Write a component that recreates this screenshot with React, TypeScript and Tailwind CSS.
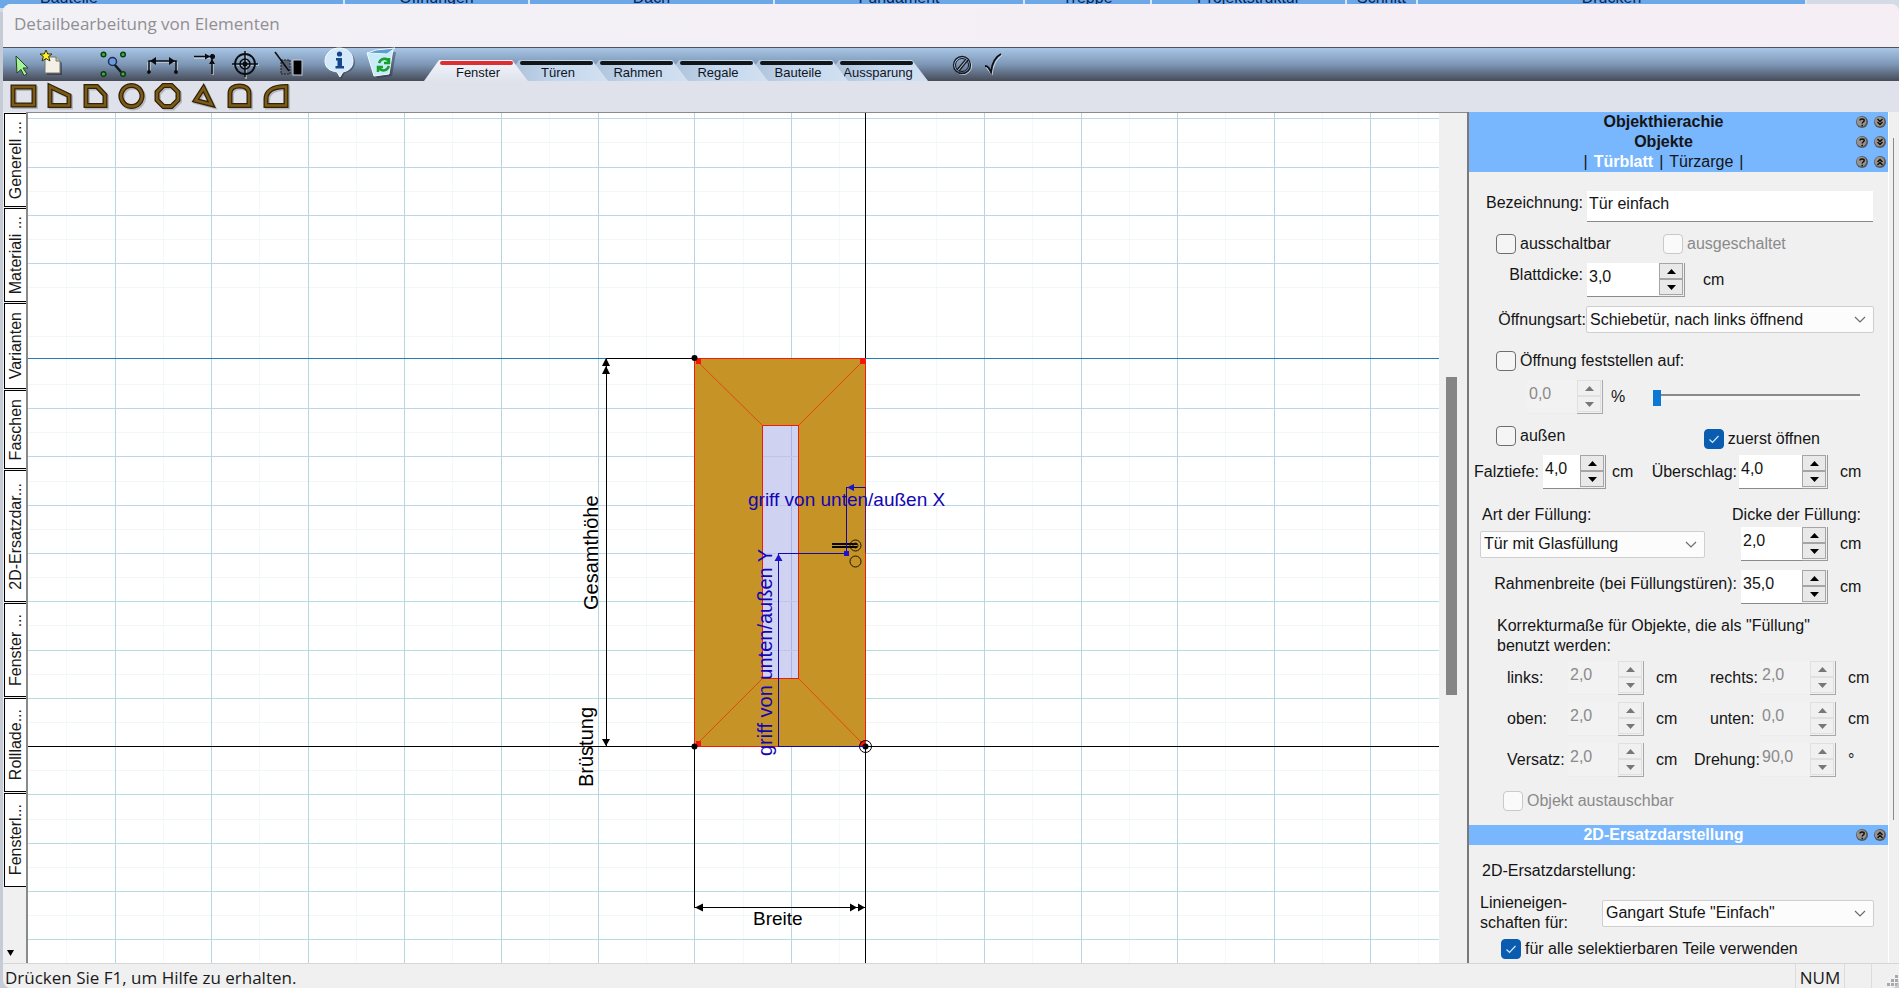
import { useState } from "react";
import type { ReactNode } from "react";
import clsx from "clsx";

const menuGroups = [
  { name: "Bauteile", style: "w-[345px] pl-10" },
  { name: "Öffnungen", style: "w-[185px] text-center" },
  { name: "Dach", style: "w-[245px] text-center" },
  { name: "Fundament", style: "w-[250px] text-center" },
  { name: "Treppe", style: "w-[127px] text-center" },
  { name: "Projektstruktur", style: "w-[195px] text-center" },
  { name: "Schnitt", style: "w-[71px] text-center" },
  { name: "Drucken", style: "w-[389px] text-center" },
];

const categories = [
  { name: "Fenster", layer: "z-60" },
  { name: "Türen", layer: "z-50" },
  { name: "Rahmen", layer: "z-40" },
  { name: "Regale", layer: "z-30" },
  { name: "Bauteile", layer: "z-20" },
  { name: "Aussparung", layer: "z-10" },
];

const sideTabs = [
  { name: "Generell ...", height: "h-[94px]" },
  { name: "Materiali ...", height: "h-[94px]" },
  { name: "Varianten", height: "h-[86px]" },
  { name: "Faschen", height: "h-[79px]" },
  { name: "2D-Ersatzdar...", height: "h-[132px]" },
  { name: "Fenster ...", height: "h-[94px]" },
  { name: "Rolllade...", height: "h-[94px]" },
  { name: "Fensterl...", height: "h-[94px]" },
];

const shapes = [
  { name: "Rechteck", d: "M4 5H25V23H4Z" },
  { name: "Schräge", d: "M5 4.5L24 13.500V23.500H5Z" },
  { name: "Abgeschrägte Ecke", d: "M5 4.500H16L24 13V23.500H5Z" },
  { name: "Kreis", d: "M14.500 3.500A10.500 10.500 0 1 1 14.400 3.500Z" },
  { name: "Achteck", d: "M10.500 3.500H18.500L25 10V18L18.500 24.500H10.500L4 18V10Z" },
  { name: "Dreieck", d: "M14.500 6L22.500 22.500L6.500 18.500Z" },
  { name: "Rundbogen", d: "M5 23.500V11.500C5 6.500 9 4 14.500 4C20 4 24 6.500 24 11.500V23.500Z" },
  { name: "Viertelbogen", d: "M25 4.500V23.500H5V17C5 9 12 4.500 25 4.500Z" },
];

function Tool({ label, className, children }: { label: string; className: string; children: ReactNode }) {
  return (
    <button aria-label={label} className={clsx("h-8 shrink-0", className)}>
      <svg className="h-8 w-full overflow-visible" fill="none">
        {children}
      </svg>
    </button>
  );
}

function MainToolbar() {
  const [active, setActive] = useState("Fenster");

  return (
    <div className="flex h-[34px] border-t border-[#4f535c] bg-linear-to-b from-[#a9c6e6] via-[#7d97b6] via-50% to-[#474c59] pl-2.5">
      <div className="flex">
        <Tool label="Auswahl" className="w-4">
          <path d="M3 8L15 20L10 20L14 26L11 27.500L8 21.500L4 25Z" fill="#a5f593" stroke="#24402a" strokeWidth="1" />
        </Tool>
        <Tool label="Neu" className="ml-3 w-6">
          <path d="M9 11H17L21 15V27H6V14Z" fill="#222" opacity=".5" />
          <path d="M7 9H15L19 13V25H4V12Z" fill="#f3f1e6" stroke="#77756a" strokeWidth="1" />
          <path d="M15 9V13H19" fill="#c9c5b5" stroke="#77756a" />
          <path d="M5 2L6.700 6H11L7.600 8.600L9 13L5 10.500L1 13L2.400 8.600L-1 6H3.300Z" fill="#fff02a" stroke="#3a3500" strokeWidth="1" />
        </Tool>
        <Tool label="Punkte suchen" className="ml-[35px] w-8">
          <g fill="#35b63a" stroke="#123a17" strokeWidth="1.500">
            <circle cx="3.500" cy="6.500" r="2.300" />
            <circle cx="23" cy="6.500" r="2.300" />
            <circle cx="3.500" cy="26" r="2.300" />
            <circle cx="23" cy="26" r="2.300" />
          </g>
          <path d="M14 16L21 24" stroke="#111827" strokeWidth="2.500" />
          <circle cx="12.500" cy="13.500" r="4" fill="#6c9be0" stroke="#1d2f55" strokeWidth="1.500" />
        </Tool>
        <Tool label="Bemaßung" className="ml-[15px] w-8">
          <path d="M1 24V14M5 14H28M30 25V14M3 26V14" stroke="#e3e8ef" strokeWidth="1" />
          <path d="M2 24V13H29V24" stroke="#0a0c10" strokeWidth="1.500" />
          <path d="M3 13L9 9V17ZM28 13L22 9V17Z" fill="#0a0c10" />
          <circle cx="2" cy="24" r="2" fill="#0a0c10" />
          <circle cx="29" cy="24" r="2" fill="#0a0c10" />
        </Tool>
        <Tool label="Ausrichten" className="ml-4 w-6">
          <path d="M-1 10H16M18 27V14" stroke="#e3e8ef" strokeWidth="1" />
          <path d="M-1 8.500H19M17 26V6" stroke="#0a0c10" strokeWidth="1.500" />
          <path d="M15 8.500L10 5.500V11.500ZM17 11L14 16H20Z" fill="#0a0c10" />
          <circle cx="17.500" cy="8.500" r="2.500" fill="#0a0c10" />
        </Tool>
        <Tool label="Fadenkreuz" className="ml-3 w-7">
          <g transform="translate(14 16)">
            <path d="M-12 1H14M1 -12V15" stroke="#dfe5ee" strokeWidth="1" />
            <circle r="10" stroke="#0a0c10" strokeWidth="1.800" />
            <circle r="5" stroke="#0a0c10" strokeWidth="1.500" />
            <circle r="2.500" fill="#0a0c10" />
            <path d="M-13 0H13M0 -13V13" stroke="#0a0c10" strokeWidth="1.500" />
          </g>
        </Tool>
        <Tool label="Füllung" className="ml-4 w-8">
          <rect x="6" y="12" width="9" height="14" fill="#5a6473" stroke="#1b1e25" strokeDasharray="2 1" />
          <rect x="18" y="12" width="9" height="15" fill="#000" stroke="#c8ced8" />
          <path d="M0 4L14 23" stroke="#0a0c10" strokeWidth="1.500" />
        </Tool>
        <Tool label="Info" className="ml-[18px] w-8">
          <path d="M15 2C24 2 30 7 30 14C30 21 25 24 20 25L16 31L13 25C6 24 1 21 1 14C1 7 7 2 15 2Z" fill="#1c2430" opacity=".4" />
          <path d="M14 0C23 0 28 6 28 13C28 20 23 23 18 24L15 29L12 24C5 23 0 20 0 13C0 6 6 0 14 0Z" fill="#d4e9fa" stroke="#f4fbff" />
          <circle cx="14.500" cy="6" r="2.600" fill="#17458f" />
          <path d="M11 10H17V18H19V20.500H10.500V18H12.500V12.500H11Z" fill="#17458f" />
        </Tool>
        <Tool label="Papierkorb" className="ml-[11px] w-8">
          <path d="M2 6L28 4L24 28L9 30Z" fill="#1c2430" opacity=".4" />
          <path d="M-1 5L25 1L21 26L6 28Z" fill="#c9eaf8" stroke="#f1fbff" />
          <path d="M-1 5L8 2L27 0L19 6Z" fill="#5e9fd0" stroke="#e9f8ff" />
          <path d="M11 15C13 10 19 9 21 14M21 10V15H16M21 18C19 23 14 24 11 20M10 24V19H15" stroke="#16a02c" strokeWidth="2.500" />
        </Tool>
      </div>

      <div className="ml-6 flex items-end" role="tablist">
        {categories.map((item) => (
          <button
            key={item.name}
            role="tab"
            aria-selected={item.name === active}
            onClick={() => setActive(item.name)}
            className={clsx(
              "relative -mr-6 flex h-[21px] w-[104px] flex-col items-center pt-px text-[13px] leading-4 text-[#11151c] [clip-path:polygon(15px_0,88px_0,100%_100%,0_100%)]",
              item.layer,
              item.name === active ? "bg-linear-to-b from-[#f3f5fb] to-[#dfe3ec]" : "bg-linear-to-r from-[#a9bdd6] via-[#c3d7ee] to-[#d3e0f1]"
            )}
          >
            <span className={clsx("h-1 w-[73px] shrink-0 rounded-full", item.name === active ? "bg-[#dc2f2f]" : "bg-[#101617]")} />
            <span className="pl-1">{item.name}</span>
          </button>
        ))}
      </div>

      <div className="ml-12 flex gap-3">
        <Tool label="Abbrechen" className="w-5">
          <circle cx="11" cy="18" r="8.500" stroke="#d5dbe4" strokeWidth="1" />
          <circle cx="10" cy="17" r="8.500" stroke="#14181f" strokeWidth="1.300" />
          <circle cx="10" cy="17" r="6.500" stroke="#14181f" strokeWidth="1" />
          <path d="M5 22L14 11" stroke="#14181f" strokeWidth="1.200" />
          <path d="M7 23L16 12" stroke="#14181f" strokeWidth="1.200" />
          <path d="M6 22.500L15 11.500" stroke="#aab4c3" strokeWidth="1" />
        </Tool>
        <Tool label="Übernehmen" className="w-5">
          <path d="M2 19L8 27C9 18 12 12 18 7" stroke="#d5dbe4" strokeWidth="1" />
          <path d="M1 18C4 18 5 20 7 24C8 15 11 9 17 6" stroke="#0c0f14" strokeWidth="1.800" />
        </Tool>
      </div>
    </div>
  );
}

function ShapeToolbar() {
  return (
    <div className="flex h-[31px] items-end gap-1.5 bg-[#dfe2ea] pl-1.5">
      {shapes.map((shape) => (
        <button key={shape.name} aria-label={shape.name} className="h-[30px] w-[30px] shrink-0">
          <svg viewBox="0 0 30 30" className="h-[30px] w-[30px]" fill="none">
            <path d={shape.d} stroke="#8b8d94" strokeWidth="5" transform="translate(1.500 1.500)" opacity=".5" />
            <path d={shape.d} stroke="#2f2208" strokeWidth="5" />
            <path d={shape.d} stroke="#7d5b14" strokeWidth="2.500" />
          </svg>
        </button>
      ))}
    </div>
  );
}

const gridX = [87, 183, 280, 376, 473, 570, 666, 763, 956, 1053, 1149, 1246, 1342];
const gridXFine = [38, 135, 231, 328, 424, 521, 618, 715, 811, 908, 1004, 1101, 1197, 1294, 1390];
const gridYBlue = [5, 54, 102, 150, 295, 343, 392, 440];
const gridYTeal = [488, 537, 585, 681, 730, 778, 826];
const gridYFine = [29, 78, 126, 174, 223, 271, 319, 368, 416, 464, 512, 561, 609, 657, 706, 754, 802];

function Drawing() {
  return (
    <svg className="h-full w-full bg-white" fontFamily="Liberation Sans, Arial, sans-serif" shapeRendering="crispEdges">
      {gridXFine.map((x) => <rect key={x} x={x} y="0" width="1" height="100%" fill="#f3f9f9" />)}
      {gridYFine.map((y) => <rect key={y} x="0" y={y} width="100%" height="1" fill="#f0f7f7" />)}
      {gridYBlue.map((y) => <rect key={y} x="0" y={y} width="100%" height="1" fill="#b9d8ee" />)}
      {gridYTeal.map((y) => <rect key={y} x="0" y={y} width="100%" height="1" fill="#b4dee0" />)}
      {gridX.map((x) => <rect key={x} x={x} y="0" width="1" height="100%" fill="#b8d6e2" />)}
      <rect x="0" y="245" width="100%" height="1" fill="#1d7fb8" />
      <rect x="0" y="633" width="100%" height="1" fill="#000" />
      <rect x="837" y="0" width="1" height="100%" fill="#000" />

      {/* door leaf with glass filling */}
      <rect x="666.500" y="245.500" width="171" height="388" fill="#c69426" stroke="#ee1c0c" />
      <rect x="734.500" y="312.500" width="36" height="253" fill="#d0d2f2" stroke="#ee1c0c" />
      <rect x="763" y="313" width="1" height="252" fill="#aab2e8" />
      <path d="M735 343.500H770M735 392.500H770M735 440.500H770M735 488.500H770M735 537.500H770" stroke="#bcc6ec" />
      <g stroke="#e04a10" shapeRendering="auto">
        <path d="M670 249L734 312M834 249L771 312M670 630L734 566M834 630L771 566" />
      </g>
      <g fill="#f5150b">
        <rect x="668" y="246" width="5" height="5" />
        <rect x="832" y="246" width="5" height="5" />
        <rect x="668" y="628" width="5" height="5" />
        <rect x="832" y="628" width="5" height="5" />
      </g>

      {/* height and width dimensions */}
      <path d="M578.500 245.500H666M578 245V633M666.500 634V794M666 794.500H837" stroke="#000" />
      <g fill="#000" shapeRendering="auto">
        <path d="M578 245L582 253H574ZM578 253L582 261H574ZM578 633L582 626H574Z" />
        <path d="M667 794.500L675 790.500V798.500ZM837 794.500L830 790.500V798.500ZM829 794.500L822 790.500V798.500Z" />
        <circle cx="666.500" cy="245" r="3" />
        <circle cx="666.500" cy="633.500" r="3" />
        <circle cx="837.500" cy="633.500" r="3" />
        <circle cx="837.500" cy="633.500" r="6" fill="none" stroke="#000" />
      </g>
      <text x="725" y="812" fontSize="19">Breite</text>
      <text transform="translate(570 497) rotate(-90)" fontSize="20">Gesamthöhe</text>
      <text transform="translate(565 674) rotate(-90)" fontSize="20">Brüstung</text>

      {/* handle */}
      <g shapeRendering="auto" stroke="#1a1208" fill="none">
        <circle cx="827.500" cy="432.500" r="5.500" />
        <circle cx="827.500" cy="432.500" r="2.500" />
        <circle cx="827.500" cy="448.500" r="5.500" />
      </g>
      <path d="M804 431H829M804 434H829" stroke="#0a0804" strokeWidth="2" />

      <path d="M837 374.500H818.500V440M750.500 633V440.500H818M750 633.500H837" stroke="#1409a8" fill="none" />
      <path d="M837.500 374V440" stroke="#1409a8" opacity=".6" />
      <rect x="816" y="438" width="5" height="5" fill="#1c14cc" />
      <path d="M819 374.500L826 371V378ZM750.500 441L754.500 448H746.500Z" fill="#1c14cc" shapeRendering="auto" />
      <g fill="#1206b4" fontSize="19">
        <text x="720" y="393">griff von unten/außen X</text>
        <text transform="translate(744 643) rotate(-90)" fontSize="20">griff von unten/außen Y</text>
      </g>
    </svg>
  );
}

function RoundButton({ label, icon }: { label: string; icon: "help" | "down" | "up" }) {
  return (
    <button aria-label={label} className="h-3 w-3">
      <svg viewBox="0 0 12 12" className="h-3 w-3">
        <circle cx="6" cy="6" r="6" fill="#55575d" />
        <circle cx="5.500" cy="5.500" r="4.800" fill="#96928e" />
        <g fill="none" stroke="#15110f" strokeWidth="1.500">
          {icon === "help" && <path d="M4 4.500C4 2.500 8.200 2.500 8.200 4.500C8.200 6 6.200 6 6.200 7.500M6.200 8.700V10" />}
          {icon === "down" && <path d="M3.500 3L6 5.500L8.500 3M3.500 6L6 8.500L8.500 6" />}
          {icon === "up" && <path d="M3.500 6L6 3.500L8.500 6M3.500 9L6 6.500L8.500 9" />}
        </g>
      </svg>
    </button>
  );
}

function SectionBar({ open, children }: { open?: boolean; children: ReactNode }) {
  return (
    <div className="flex h-5 items-center gap-1.5 bg-[#78b6fe] pr-0.5 text-base leading-5">
      <div className="flex-1 pl-2 text-center">{children}</div>
      <RoundButton label="Hilfe" icon="help" />
      <RoundButton label={open ? "Zuklappen" : "Aufklappen"} icon={open ? "up" : "down"} />
    </div>
  );
}

function Check({ label, checked, disabled }: { label: string; checked?: boolean; disabled?: boolean }) {
  return (
    <label className={clsx("relative flex h-5 items-center gap-1 whitespace-nowrap", disabled && "text-[#8a8a8a]")}>
      <input
        type="checkbox"
        defaultChecked={checked}
        disabled={disabled}
        className="peer h-5 w-5 appearance-none rounded border border-[#6e6e6e] bg-[#f5f5f5] checked:border-[#0a5cb0] checked:bg-[#0a5cb0] disabled:border-[#c9c9c9] disabled:bg-[#fafafa]"
      />
      <svg viewBox="0 0 20 20" className="absolute left-0 hidden h-5 w-5 peer-checked:block" fill="none">
        <path d="M5.500 10.500L8.500 13.500L14.500 7" stroke="#d8e8f8" strokeWidth="1.200" />
      </svg>
      {label}
    </label>
  );
}

interface NumberFieldProps {
  id: string;
  value: string;
  width: string;
  unit?: string;
  unitGap?: string;
  disabled?: boolean;
}

function NumberField({ id, value, width, unit, unitGap = "ml-3", disabled }: NumberFieldProps) {
  const step = clsx(
    "flex h-4 w-6 items-center justify-center border",
    disabled ? "border-[#e0e0e0] text-[#777]" : "border-[#a5a5a5] bg-[#e9e9e9] text-black"
  );
  return (
    <div className="flex shrink-0 items-center">
      <input
        id={id}
        defaultValue={value}
        disabled={disabled}
        className={clsx(
          "h-[34px] border-b pb-1.5 pl-0.5",
          width,
          disabled ? "border-[#ececec] bg-[#f2f2f2] text-[#8a8a8a]" : "border-[#8a8a8a] bg-white"
        )}
      />
      <div className={clsx("flex h-[34px] w-[26px] flex-col border-r border-b", disabled ? "border-[#a8a8a8]" : "border-[#9a9a9a]")}>
        <button disabled={disabled} aria-label="Mehr" className={step}>
          <svg className="h-[5px] w-[9px]"><path d="M0 5L4.500 0L9 5Z" fill="currentColor" /></svg>
        </button>
        <button disabled={disabled} aria-label="Weniger" className={step}>
          <svg className="h-[5px] w-[9px]"><path d="M0 0L4.500 5L9 0Z" fill="currentColor" /></svg>
        </button>
      </div>
      {unit && <span className={unitGap}>{unit}</span>}
    </div>
  );
}

function Select({ id, value, className }: { id: string; value: string; className: string }) {
  return (
    <div className={clsx("relative", className)}>
      <select id={id} className="h-[27px] w-full appearance-none rounded-xs border border-[#cfcfcf] bg-[#fcfcfc] pl-[3px] leading-5">
        <option>{value}</option>
      </select>
      <svg viewBox="0 0 12 7" className="pointer-events-none absolute top-[10px] right-2 h-[7px] w-3" fill="none">
        <path d="M1 1L6 6L11 1" stroke="#6b6b6b" strokeWidth="1.200" />
      </svg>
    </div>
  );
}

function PropertyPanel() {
  return (
    <aside className="w-[421px] shrink-0 border-l-2 border-[#7a7a7a] bg-[#f0f0f0] text-base leading-5 text-[#141414]">
      <SectionBar><b>Objekthierachie</b></SectionBar>
      <SectionBar><b>Objekte</b></SectionBar>
      <SectionBar open>
        <div className="flex justify-center gap-1.5">
          <span>|</span>
          <button className="font-bold text-white">Türblatt</button>
          <span>|</span>
          <button>Türzarge</button>
          <span>|</span>
        </div>
      </SectionBar>

      <div className="mt-[19px] flex h-[31px] pr-[15px]">
        <label htmlFor="name" className="w-[118px] pt-0.5 pr-1 text-right">Bezeichnung:</label>
        <input id="name" defaultValue="Tür einfach" className="min-w-0 flex-1 border-b border-[#8a8a8a] bg-white pb-1 pl-0.5" />
      </div>
      <div className="mt-3 flex pl-[27px]">
        <div className="w-[167px]"><Check label="ausschaltbar" /></div>
        <Check label="ausgeschaltet" disabled />
      </div>
      <div className="mt-[9px] flex">
        <label htmlFor="thickness" className="w-[118px] pt-0.5 pr-1 text-right">Blattdicke:</label>
        <NumberField id="thickness" value="3,0" width="w-[72px]" unit="cm" unitGap="ml-[18px]" />
      </div>
      <div className="mt-[9px] flex items-center pr-[14px]">
        <label htmlFor="opening" className="w-[117px] text-right">Öffnungsart:</label>
        <Select id="opening" value="Schiebetür, nach links öffnend" className="flex-1" />
      </div>
      <div className="mt-[18px] pl-[27px]">
        <Check label="Öffnung feststellen auf:" />
      </div>
      <div className="mt-[9px] flex items-center pl-[58px]">
        <NumberField id="percent" value="0,0" width="w-[50px]" unit="%" unitGap="ml-2" disabled />
        <input
          type="range"
          aria-label="Öffnung in Prozent"
          defaultValue="0"
          className="ml-7 h-4 w-[207px] appearance-none bg-transparent [&::-webkit-slider-runnable-track]:h-1.5 [&::-webkit-slider-runnable-track]:border-t-2 [&::-webkit-slider-runnable-track]:border-[#8a8a8a] [&::-webkit-slider-runnable-track]:bg-[#f7f7f7] [&::-webkit-slider-thumb]:-mt-1.5 [&::-webkit-slider-thumb]:h-4 [&::-webkit-slider-thumb]:w-2 [&::-webkit-slider-thumb]:appearance-none [&::-webkit-slider-thumb]:bg-[#0b78d4]"
        />
      </div>
      <div className="mt-3 flex h-[23px] justify-between pr-[57px] pl-[27px]">
        <Check label="außen" />
        <div className="self-end pr-[11px]"><Check label="zuerst öffnen" checked /></div>
      </div>
      <div className="mt-1.5 flex items-center">
        <label htmlFor="rebate" className="w-[74px] pr-1 text-right">Falztiefe:</label>
        <NumberField id="rebate" value="4,0" width="w-[37px]" unit="cm" unitGap="ml-1.5" />
        <label htmlFor="overlap" className="ml-auto pr-0.5">Überschlag:</label>
        <div className="w-[149px]"><NumberField id="overlap" value="4,0" width="w-[63px]" unit="cm" /></div>
      </div>
      <div className="mt-4 flex justify-between pr-[27px] pl-[13px]">
        <label htmlFor="filling">Art der Füllung:</label>
        <label htmlFor="depth">Dicke der Füllung:</label>
      </div>
      <div className="mt-0.5 flex items-center pl-[11px]">
        <Select id="filling" value="Tür mit Glasfüllung" className="w-[225px]" />
        <div className="ml-auto w-[149px] pl-0.5"><NumberField id="depth" value="2,0" width="w-[61px]" unit="cm" /></div>
      </div>
      <div className="mt-[9px] flex">
        <label htmlFor="frame" className="ml-auto pt-1 pr-0.5">Rahmenbreite (bei Füllungstüren):</label>
        <div className="w-[149px] pl-0.5"><NumberField id="frame" value="35,0" width="w-[61px]" unit="cm" /></div>
      </div>
      <p className="mt-3 pl-7">Korrekturmaße für Objekte, die als "Füllung"<br />benutzt werden:</p>

      <div className="mt-[5px] grid grid-cols-[61px_142px_50px_1fr] items-center gap-y-[7px] pl-[38px]">
        <label htmlFor="left">links:</label>
        <NumberField id="left" value="2,0" width="w-[50px]" unit="cm" disabled />
        <label htmlFor="right">rechts:</label>
        <NumberField id="right" value="2,0" width="w-[50px]" unit="cm" disabled />
        <label htmlFor="top">oben:</label>
        <NumberField id="top" value="2,0" width="w-[50px]" unit="cm" disabled />
        <label htmlFor="bottom">unten:</label>
        <NumberField id="bottom" value="0,0" width="w-[50px]" unit="cm" disabled />
        <label htmlFor="offset">Versatz:</label>
        <NumberField id="offset" value="2,0" width="w-[50px]" unit="cm" disabled />
        <label htmlFor="rotation" className="-ml-4">Drehung:</label>
        <NumberField id="rotation" value="90,0" width="w-[50px]" unit="°" disabled />
      </div>

      <div className="mt-[14px] mb-[14px] pl-[34px]">
        <Check label="Objekt austauschbar" disabled />
      </div>
      <SectionBar open><b className="text-white">2D-Ersatzdarstellung</b></SectionBar>
      <p className="mt-4 pl-[13px]">2D-Ersatzdarstellung:</p>
      <div className="mt-3 flex items-center pr-[14px] pl-[11px]">
        <label htmlFor="lines" className="w-[122px]">Linieneigen-<br />schaften für:</label>
        <Select id="lines" value={'Gangart Stufe "Einfach"'} className="flex-1" />
      </div>
      <div className="mt-1.5 pl-8">
        <Check label="für alle selektierbaren Teile verwenden" checked />
      </div>
    </aside>
  );
}

export default function App() {
  return (
    <div className="flex min-h-screen flex-col bg-[#c5ccd6] font-['Liberation_Sans',Arial,sans-serif]">
      <div className="flex h-3 items-end overflow-hidden bg-[#d3dce4] pb-1 text-base leading-5 text-[#0d2350]">
        {menuGroups.map((group) => (
          <span key={group.name} className={clsx("shrink-0 border-r-2 border-[#d9e6f5] bg-[#6ca7e8]", group.style)}>
            {group.name}
          </span>
        ))}
      </div>

      <div className="relative -mt-2 ml-[3px] flex flex-1 flex-col overflow-hidden rounded-lg bg-[#f0f0f0]">
        <header className="flex h-[43px] items-center bg-linear-to-r from-[#f2f1f6] to-[#f6eef5] pb-1 pl-[11px]">
          <h1 className="font-['Open_Sans',sans-serif] text-[17px] text-[#8f8f93]">Detailbearbeitung von Elementen</h1>
        </header>
        <MainToolbar />
        <ShapeToolbar />

        <main className="flex flex-1">
          <nav className="flex w-[23px] shrink-0 flex-col gap-px pt-px pl-px">
            {sideTabs.map((tab) => (
              <button key={tab.name} className={clsx("flex w-[22px] items-center justify-center border-y border-l border-black bg-white", tab.height)}>
                <span className="rotate-180 text-base leading-5 whitespace-nowrap text-[#1a1a1a] [writing-mode:vertical-rl]">{tab.name}</span>
              </button>
            ))}
            <button aria-label="Weitere Register" className="mt-auto mb-1.5 ml-[3px] h-2 w-2">
              <svg className="h-2 w-2"><path d="M0 1H7L3.500 7Z" /></svg>
            </button>
          </nav>
          <div className="relative min-w-0 flex-1 border-t border-l-2 border-[#8a8a8a]">
            <div className="absolute inset-0"><Drawing /></div>
          </div>
          <div className="flex w-[28px] shrink-0 flex-col border-t border-[#8a8a8a] pl-[7px]">
            <div className="h-[31%]" />
            <div className="h-[318px] w-[11px] bg-[#858585]" />
          </div>
          <PropertyPanel />
          <div className="flex w-[11px] shrink-0 flex-col border-l border-white pt-[26px] pl-1">
            <div className="h-[682px] w-px bg-[#8a8a8a]" />
          </div>
        </main>

        <footer className="flex h-[25px] items-stretch border-t border-[#d6d6d6] pl-0.5 font-['Open_Sans',sans-serif] text-[17px] leading-7 text-[#1a1a1a]">
          <span className="flex-1">Drücken Sie F1, um Hilfe zu erhalten.</span>
          <span className="w-[49px] border-l border-[#dcdcdc] text-center">NUM</span>
          <span className="w-7 border-x border-[#dcdcdc]" />
          <svg className="h-6 w-[27px]" fill="#a9a9a9">
            <path d="M23 11h3v3h-3zM19 15h3v3h-3zM23 15h3v3h-3zM15 19h3v3h-3zM19 19h3v3h-3zM23 19h3v3h-3z" />
          </svg>
        </footer>
      </div>
    </div>
  );
}
